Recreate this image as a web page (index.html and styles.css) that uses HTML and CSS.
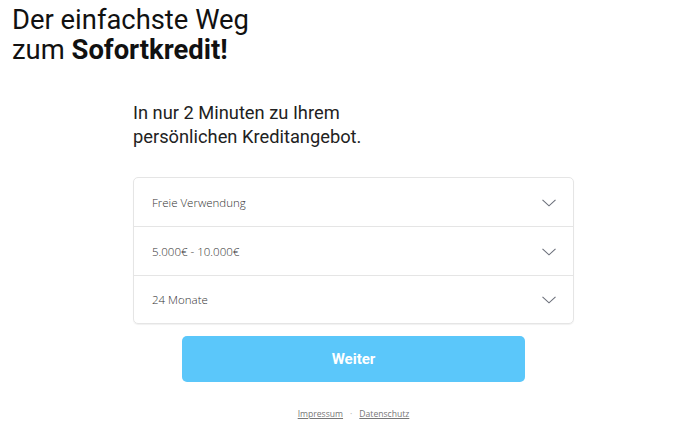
FILE: index.html
```html
<!DOCTYPE html>
<html lang="de">
<head>
<meta charset="utf-8">
<title>Sofortkredit</title>
<link rel="stylesheet" href="styles.css">
</head>
<body>
<header class="hero">
  <h1 class="hero-title">Der einfachste Weg<br>zum <strong>Sofortkredit!</strong></h1>
</header>
<main class="column">
  <p class="lead">In nur 2 Minuten zu Ihrem<br>persönlichen Kreditangebot.</p>
  <div class="card">
    <div class="row"><span>Freie Verwendung</span><svg class="chev" viewBox="0 0 14 8"><path d="M0.5 0.8 L7 6.8 L13.5 0.8"/></svg></div>
    <div class="row"><span>5.000€ - 10.000€</span><svg class="chev" viewBox="0 0 14 8"><path d="M0.5 0.8 L7 6.8 L13.5 0.8"/></svg></div>
    <div class="row"><span>24 Monate</span><svg class="chev" viewBox="0 0 14 8"><path d="M0.5 0.8 L7 6.8 L13.5 0.8"/></svg></div>
  </div>
  <button class="btn">Weiter</button>
  <nav class="footer"><a href="#">Impressum</a><span class="dot">·</span><a href="#">Datenschutz</a></nav>
</main>
</body>
</html>
```
FILE: styles.css
```css
* { box-sizing: border-box; }
body {
  margin: 0;
  background: #fff;
  font-family: Roboto, "Liberation Sans", sans-serif;
  color: #111;
}
.hero { padding: 5px 0 0 12px; }
.hero-title {
  margin: 0;
  font-size: 27.4px;
  line-height: 30px;
  font-weight: 400;
  color: #111;
}
.hero-title strong { font-weight: 700; }
.column {
  width: 441px;
  margin-left: 133px;
  display: flex;
  flex-direction: column;
}
.lead {
  margin: 36px 0 0;
  font-size: 18.3px;
  line-height: 24px;
  color: #222;
}
.card {
  margin-top: 28px;
  border: 1px solid #e5e5e5;
  border-radius: 5px;
  box-shadow: 0 1px 1px rgba(0,0,0,0.06);
  display: flex;
  flex-direction: column;
}
.row {
  height: 48.4px;
  display: flex;
  align-items: center;
  justify-content: space-between;
  padding: 1px 17px 0 18px;
  font-family: "Open Sans", sans-serif;
  font-weight: 300;
  font-size: 11.5px;
  color: #333;
}
.row + .row { border-top: 1px solid #e5e5e5; }
.chev {
  width: 14px;
  height: 8px;
  fill: none;
  stroke: #6b6f7a;
  stroke-width: 1.1;
}
.btn {
  margin: 12px 49px 0;
  height: 46px;
  border: none;
  border-radius: 5px;
  background: #5bc7fa;
  color: #fff;
  font-family: Roboto, sans-serif;
  font-weight: 700;
  font-size: 15px;
}
.footer {
  margin-top: 26px;
  display: flex;
  justify-content: center;
  gap: 7px;
  font-family: "Open Sans", sans-serif;
  font-size: 8.6px;
  color: #888;
}
.footer a { color: #777; text-decoration: underline; }
.dot { color: #aaa; }
```
